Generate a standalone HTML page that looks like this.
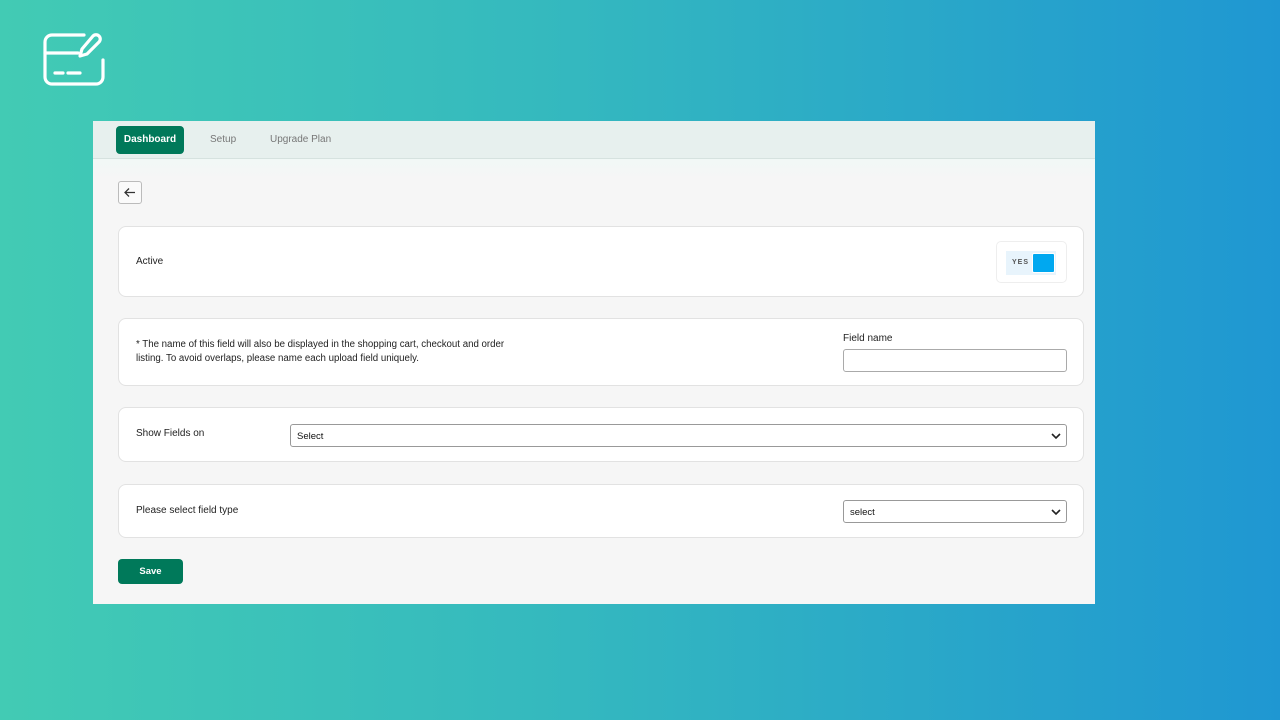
<!DOCTYPE html>
<html><head><style>
*{box-sizing:border-box;margin:0;padding:0}
body{width:1280px;height:720px;overflow:hidden;font-family:"Liberation Sans",Arial,sans-serif;background:linear-gradient(90deg,#42cbb4 0%,#34b8bf 45%,#1f97d2 100%);position:relative}
.panel{position:absolute;left:93px;top:121px;width:1002px;height:483px;background:#f6f6f6}
.nav{height:38px;background:#e7f0ee;border-bottom:1px solid #d6e2df;position:relative}
.strip{height:20px;background:linear-gradient(#f1f8f6,#f6f6f6)}
.nav .b{position:absolute;top:5px;left:23px;width:68px;height:28px;background:#00795a;border-radius:4px;color:#fff;font-size:10px;font-weight:bold;text-align:center;line-height:28px}
.nav span{position:absolute;top:13px;font-size:10px;color:#777}
.back{position:absolute;left:25px;top:60px;width:24px;height:23px;border:1px solid #bbb;border-radius:3px;background:#fafafa}
.card{position:absolute;left:25px;width:966px;background:#fff;border:1px solid #e2e2e2;border-radius:8px}
.t{position:absolute;left:17px;font-size:10px;color:#222}
.sel{position:absolute;height:23px;border:1px solid #999;border-radius:3px;background:#fff;font-size:9.5px;color:#111;padding-left:6px;line-height:23px}
.sel svg{position:absolute;right:5px;top:8px}
.save{position:absolute;left:25px;top:438px;width:65px;height:25px;background:#00795a;border-radius:4px;color:#fff;font-size:9.5px;font-weight:bold;text-align:center;line-height:26px}
</style></head><body>
<svg style="position:absolute;left:42px;top:31px" width="64" height="56" viewBox="0 0 64 56" fill="none" stroke="#fff" stroke-width="3.2" stroke-linecap="round" stroke-linejoin="round">
<path d="M42 4H10a7 7 0 0 0-7 7v35a7 7 0 0 0 7 7h44a7 7 0 0 0 7-7V29"/>
<path d="M3 22h33"/><path d="M13 42h8M26 42h12"/>
<path d="M51 5a3.5 3.5 0 0 1 6 6L45 23l-7 2 2-7z"/>
</svg>
<div class="panel">
<div class="nav"><div class="b">Dashboard</div><span style="left:117px">Setup</span><span style="left:177px">Upgrade Plan</span></div>
<div class="strip"></div>
<div class="back"><svg width="22" height="21" viewBox="0 0 22 21" fill="none" stroke="#333" stroke-width="1.3"><path d="M6 10.5h10M10 6.5l-4 4 4 4"/></svg></div>
<div class="card" style="top:105px;height:71px">
<div class="t" style="top:29px">Active</div>
<div style="position:absolute;left:877px;top:14px;width:71px;height:42px;border:1px solid #eee;border-radius:5px;background:#fff">
<div style="position:absolute;left:9px;top:9px;width:50px;height:24px;background:#e8f4fc"></div>
<div style="position:absolute;left:15px;top:17px;font-size:7px;font-weight:bold;color:#555;letter-spacing:1px">YES</div>
<div style="position:absolute;left:35px;top:11px;width:23px;height:20px;background:#00a8f0;border:1px solid #fff;border-radius:2px"></div>
</div></div>
<div class="card" style="top:197px;height:68px">
<div class="t" style="top:19px;line-height:14px;font-size:9.7px">* The name of this field will also be displayed in the shopping cart, checkout and order<br>listing. To avoid overlaps, please name each upload field uniquely.</div>
<div style="position:absolute;left:724px;top:14px;font-size:10px;color:#222">Field name</div>
<div class="sel" style="left:724px;top:30px;width:224px;border-color:#aaa"></div>
</div>
<div class="card" style="top:286px;height:55px">
<div class="t" style="top:20px">Show Fields on</div>
<div class="sel" style="left:171px;top:16px;width:777px">Select<svg width="10" height="7" viewBox="0 0 10 7" fill="none" stroke="#222" stroke-width="1.6"><path d="M1 1l4 4 4-4"/></svg></div>
</div>
<div class="card" style="top:363px;height:54px">
<div class="t" style="top:20px">Please select field type</div>
<div class="sel" style="left:724px;top:15px;width:224px">select<svg width="10" height="7" viewBox="0 0 10 7" fill="none" stroke="#222" stroke-width="1.6"><path d="M1 1l4 4 4-4"/></svg></div>
</div>
<div class="save">Save</div>
</div>
</body></html>
